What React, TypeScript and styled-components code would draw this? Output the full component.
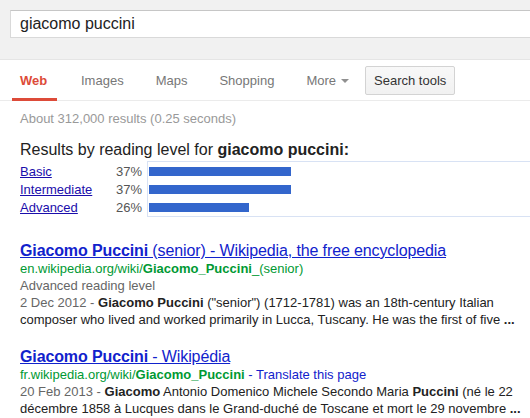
import React from "react";
import styled, { createGlobalStyle } from "styled-components";

const GlobalStyle = createGlobalStyle`
  html, body {
    margin: 0;
    padding: 0;
    background: #fff;
    overflow: hidden;
  }
  body {
    font-family: "Liberation Sans", Arial, sans-serif;
    font-size: 13px;
    color: #222;
  }
`;

const Page = styled.div`
  width: 530px;
  height: 418px;
  overflow: hidden;
`;

const Header = styled.div`
  height: 60px;
  box-sizing: border-box;
  padding: 10px 0 0 10px;
  background: #f1f1f1;
  border-bottom: 1px solid #e5e5e5;
`;

const SearchBox = styled.div`
  width: 560px;
  height: 28px;
  box-sizing: border-box;
  padding-left: 9px;
  background: #fff;
  border: 1px solid #d9d9d9;
  border-top-color: #c6c6c6;
  font-size: 16px;
  line-height: 26px;
  color: #222;
`;

const NavBar = styled.div`
  height: 41px;
  box-sizing: border-box;
  display: flex;
  align-items: stretch;
  gap: 16px;
  padding-left: 12px;
  border-bottom: 1px solid #ebebeb;
`;

const Tab = styled.div<{ $active?: boolean }>`
  display: flex;
  align-items: center;
  padding: 2px 8px 0;
  margin-bottom: -1px;
  font-size: 13px;
  font-weight: ${(p) => (p.$active ? "bold" : "normal")};
  color: ${(p) => (p.$active ? "#dd4b39" : "#777")};
  border-bottom: 3px solid ${(p) => (p.$active ? "#dd4b39" : "transparent")};
  min-width: ${(p) => (p.$active ? "29px" : "auto")};
`;

const Caret = styled.span`
  display: inline-block;
  margin-left: 5px;
  margin-top: 1px;
  border-left: 4px solid transparent;
  border-right: 4px solid transparent;
  border-top: 4px solid #909090;
`;

const ToolsCell = styled.div`
  display: flex;
  align-items: center;
  margin-left: -8px;
`;

const ToolsButton = styled.div`
  height: 29px;
  box-sizing: border-box;
  padding: 0 8px;
  line-height: 27px;
  font-size: 13px;
  color: #333;
  border: 1px solid #d3d3d3;
  border-radius: 2px;
  background: linear-gradient(#f8f8f8, #f1f1f1);
  margin-top: 1px;
`;

const Content = styled.div`
  padding: 10px 0 0 20px;
`;

const Stats = styled.div`
  font-size: 13px;
  line-height: 16px;
  color: #999;
`;

const LevelHeading = styled.div`
  margin-top: 13px;
  font-size: 16px;
  line-height: 19px;
  color: #222;
`;

const LevelTable = styled.div`
  display: flex;
  margin-top: 2px;
`;

const LevelLabels = styled.div`
  width: 127px;
  padding-top: 1px;
`;

const LevelRow = styled.div`
  display: flex;
  height: 18px;
  align-items: center;
  font-size: 13px;
`;

const LevelLink = styled.a`
  width: 96px;
  color: #1a0dab;
  text-decoration: underline;
`;

const Percent = styled.span`
  width: 24px;
  text-align: right;
  color: #555;
`;

const Chart = styled.div`
  flex: 1;
  border: 1px solid #d8e2f4;
  border-right: none;
`;

const BarRow = styled.div`
  height: 18px;
  display: flex;
  align-items: center;
  padding-left: 1px;
`;

const Bar = styled.div`
  height: 9px;
  background: #3366cc;
`;

const Result = styled.div`
  margin-top: 24px;

  & + & {
    margin-top: 19px;
  }
`;

const Title = styled.a`
  display: inline-block;
  font-size: 16px;
  line-height: 19px;
  letter-spacing: -0.12px;
  color: #1122cc;
  text-decoration: underline;
  white-space: nowrap;
`;

const Cite = styled.div`
  font-size: 13px;
  line-height: 17px;
  color: #009933;
  white-space: nowrap;
`;

const Translate = styled.span`
  color: #1122cc;
`;

const Meta = styled.div`
  font-size: 13px;
  line-height: 17px;
  color: #666;
`;

const Snippet = styled.div`
  font-size: 13px;
  line-height: 17px;
  color: #222;
  white-space: nowrap;
`;

const DateText = styled.span`
  color: #666;
`;

const levels = [
  { name: "Basic", pct: 37 },
  { name: "Intermediate", pct: 37 },
  { name: "Advanced", pct: 26 },
];

const App: React.FC = () => {
  return (
    <Page>
      <GlobalStyle />
      <Header>
        <SearchBox>giacomo puccini</SearchBox>
      </Header>
      <NavBar>
        <Tab $active>Web</Tab>
        <Tab>Images</Tab>
        <Tab>Maps</Tab>
        <Tab>Shopping</Tab>
        <Tab>
          More
          <Caret />
        </Tab>
        <ToolsCell>
          <ToolsButton>Search tools</ToolsButton>
        </ToolsCell>
      </NavBar>
      <Content>
        <Stats>About 312,000 results (0.25 seconds)</Stats>
        <LevelHeading>
          Results by reading level for <b>giacomo puccini:</b>
        </LevelHeading>
        <LevelTable>
          <LevelLabels>
            {levels.map((l) => (
              <LevelRow key={l.name}>
                <LevelLink href="#">{l.name}</LevelLink>
                <Percent>{l.pct}%</Percent>
              </LevelRow>
            ))}
          </LevelLabels>
          <Chart>
            {levels.map((l) => (
              <BarRow key={l.name}>
                <Bar style={{ width: Math.round(l.pct * 3.84) }} />
              </BarRow>
            ))}
          </Chart>
        </LevelTable>

        <Result>
          <Title href="#">
            <b>Giacomo Puccini</b> (senior) - Wikipedia, the free encyclopedia
          </Title>
          <Cite>
            en.wikipedia.org/wiki/<b>Giacomo_Puccini</b>_(senior)
          </Cite>
          <Meta>Advanced reading level</Meta>
          <Snippet>
            <DateText>2 Dec 2012 - </DateText>
            <b>Giacomo Puccini</b> ("senior") (1712-1781) was an 18th-century Italian
          </Snippet>
          <Snippet>
            composer who lived and worked primarily in Lucca, Tuscany. He was the first of five <b>...</b>
          </Snippet>
        </Result>

        <Result>
          <Title href="#">
            <b>Giacomo Puccini</b> - Wikipédia
          </Title>
          <Cite>
            fr.wikipedia.org/wiki/<b>Giacomo_Puccini</b> <Translate>- Translate this page</Translate>
          </Cite>
          <Snippet>
            <DateText>20 Feb 2013 - </DateText>
            <b>Giacomo</b> Antonio Domenico Michele Secondo Maria <b>Puccini</b> (né le 22
          </Snippet>
          <Snippet>
            décembre 1858 à Lucques dans le Grand-duché de Toscane et mort le 29 novembre <b>...</b>
          </Snippet>
        </Result>
      </Content>
    </Page>
  );
};

export default App;
